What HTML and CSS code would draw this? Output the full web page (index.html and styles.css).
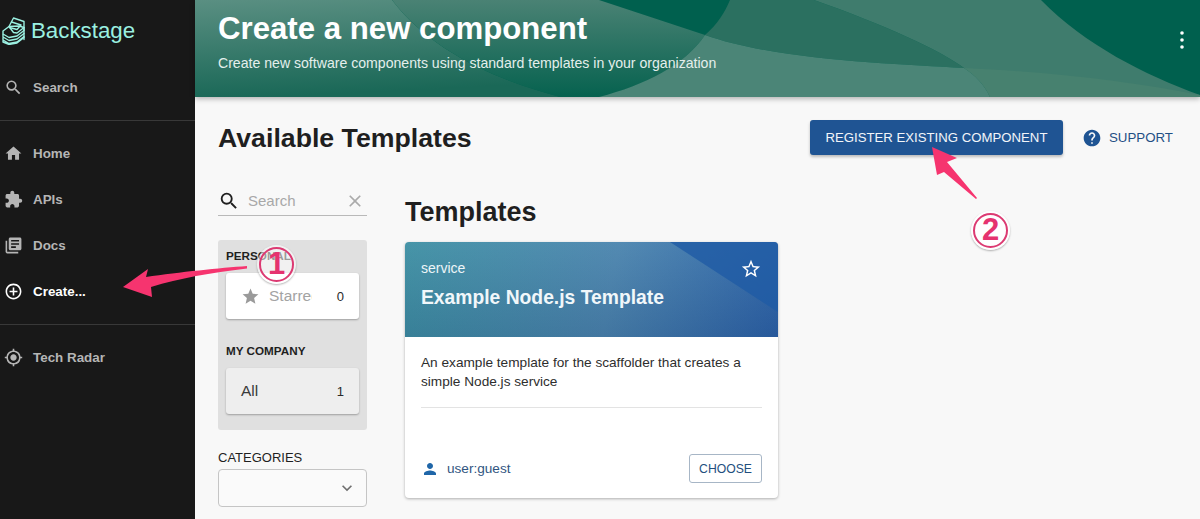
FILE: index.html
```html
<!DOCTYPE html>
<html lang="en">
<head>
<meta charset="utf-8">
<title>Create a new component</title>
<link rel="stylesheet" href="styles.css">
</head>
<body>
<div class="app">
  <nav class="sidebar">
    <div class="logo">
      <svg class="logo-mark" viewBox="0 0 23 28" fill="none" stroke="#9bf0e1" stroke-width="1.400" stroke-linejoin="round" stroke-linecap="round">
        <path d="M1 14 7 9.500 17 9l5 1.500v3L15 19l-8 1.500-6-3.500z"/>
        <path d="M1 17.500v2.500l6 3.500 8-1.500 7-5.500M1 20.500V23l6 3.500 8-1.500 7-5.500M1 23.500V25l6 2.500 8-1.500 7-5.500"/>
        <path d="M22 10.500V22.500"/>
        <path d="M7 9.500 11.500 1 22 4.500v6L15 16l-3.500-.5z"/>
        <path d="M9.500 5 19 8 15 12.500 7.500 10.500"/>
      </svg>
      <span class="logo-text">Backstage</span>
    </div>
    <a class="nav-item">
      <svg class="nav-icon" viewBox="0 0 24 24"><path d="M15.500 14h-.79l-.28-.27A6.470 6.470 0 0 0 16 9.500 6.500 6.500 0 1 0 9.500 16c1.610 0 3.090-.59 4.230-1.570l.27.28v.79l5 4.990L20.490 19l-4.990-5zm-6 0C7.010 14 5 11.990 5 9.500S7.010 5 9.500 5 14 7.010 14 9.500 11.990 14 9.500 14z"/></svg>
      <span>Search</span>
    </a>
    <div class="nav-spacer"></div>
    <hr class="nav-divider">
    <div class="nav-group">
      <a class="nav-item">
        <svg class="nav-icon" viewBox="0 0 24 24"><path d="M10 20v-6h4v6h5v-8h3L12 3 2 12h3v8z"/></svg>
        <span>Home</span>
      </a>
      <a class="nav-item">
        <svg class="nav-icon" viewBox="0 0 24 24"><path d="M20.500 11H19V7c0-1.100-.9-2-2-2h-4V3.500C13 2.120 11.880 1 10.500 1S8 2.120 8 3.500V5H4c-1.100 0-1.990.9-1.990 2v3.800H3.500c1.490 0 2.700 1.210 2.700 2.700s-1.210 2.700-2.700 2.700H2V20c0 1.100.9 2 2 2h3.800v-1.500c0-1.490 1.210-2.700 2.700-2.700 1.490 0 2.700 1.210 2.700 2.700V22H17c1.100 0 2-.9 2-2v-4h1.500c1.380 0 2.500-1.120 2.500-2.500S21.880 11 20.500 11z"/></svg>
        <span>APIs</span>
      </a>
      <a class="nav-item">
        <svg class="nav-icon" viewBox="0 0 24 24"><path d="M4 6H2v14c0 1.100.9 2 2 2h14v-2H4V6zm16-4H8c-1.100 0-2 .9-2 2v12c0 1.100.9 2 2 2h12c1.100 0 2-.9 2-2V4c0-1.100-.9-2-2-2zm-1 9H9V9h10v2zm-4 4H9v-2h6v2zm4-8H9V5h10v2z"/></svg>
        <span>Docs</span>
      </a>
      <a class="nav-item nav-active">
        <svg class="nav-icon" viewBox="0 0 24 24"><path d="M13 7h-2v4H7v2h4v4h2v-4h4v-2h-4V7zm-1-5C6.480 2 2 6.480 2 12s4.480 10 10 10 10-4.480 10-10S17.520 2 12 2zm0 18c-4.410 0-8-3.590-8-8s3.590-8 8-8 8 3.590 8 8-3.590 8-8 8z"/></svg>
        <span>Create...</span>
      </a>
    </div>
    <hr class="nav-divider">
    <div class="nav-group-last">
      <a class="nav-item">
        <svg class="nav-icon" viewBox="0 0 24 24"><path d="M12 8c-2.210 0-4 1.790-4 4s1.790 4 4 4 4-1.790 4-4-1.790-4-4-4zm8.940 3A8.994 8.994 0 0 0 13 3.060V1h-2v2.060A8.994 8.994 0 0 0 3.060 11H1v2h2.060A8.994 8.994 0 0 0 11 20.940V23h2v-2.060A8.994 8.994 0 0 0 20.940 13H23v-2h-2.060zM12 19c-3.870 0-7-3.130-7-7s3.130-7 7-7 7 3.130 7 7-3.130 7-7 7z"/></svg>
        <span>Tech Radar</span>
      </a>
    </div>
  </nav>

  <main class="main">
    <header class="hero">
      <svg class="hero-art" viewBox="0 0 1005 97" preserveAspectRatio="none">
        <defs>
          <linearGradient id="heroFade" x1="0" y1="0" x2="0.18" y2="1">
            <stop offset="0" stop-color="#5a8f82"/>
            <stop offset="1" stop-color="#1a6857"/>
          </linearGradient>
          <linearGradient id="heroBand" x1="0" y1="0" x2="0" y2="1">
            <stop offset="0" stop-color="#4a8274"/>
            <stop offset="1" stop-color="#06624f"/>
          </linearGradient>
        </defs>
        <rect width="1005" height="97" fill="#00604e"/>
        <path d="M0 0H197C235 50 300 80 365 97H0z" fill="url(#heroFade)"/>
        <path d="M197 0H404L510 35C490 65 450 85 404 97H365C300 80 235 50 197 0z" fill="url(#heroBand)"/>
        <path d="M535 0H619C690 25 745 50 769 68 700 64 580 60 510 35 522 25 530 12 535 0z" fill="#2b7060"/>
        <path d="M619 0H846C890 45 950 75 1005 95V97H795C790 85 780 75 769 68 745 50 690 25 619 0z" fill="#3f7c6d"/>
        <path d="M510 35C580 60 700 64 769 68 780 75 790 85 795 97H404C450 85 490 65 510 35z" fill="#4b8577"/>
        <path d="M769 68C860 72 940 82 1005 95V97H795C790 85 780 75 769 68z" fill="#47816f"/>
      </svg>
      <div class="hero-text">
        <h1>Create a new component</h1>
        <p>Create new software components using standard templates in your organization</p>
      </div>
      <svg class="hero-menu" viewBox="0 0 4 20"><circle cx="2" cy="3" r="1.800"/><circle cx="2" cy="10" r="1.800"/><circle cx="2" cy="17" r="1.800"/></svg>
    </header>

    <div class="content">
      <div class="content-head">
        <h2 class="page-title">Available Templates</h2>
        <div class="head-actions">
          <button class="btn-primary">REGISTER EXISTING COMPONENT</button>
          <a class="support">
            <svg class="support-icon" viewBox="0 0 24 24"><path d="M12 2C6.480 2 2 6.480 2 12s4.480 10 10 10 10-4.480 10-10S17.520 2 12 2zm1 17h-2v-2h2v2zm2.070-7.750l-.9.920C13.450 12.900 13 13.500 13 15h-2v-.5c0-1.100.45-2.100 1.170-2.830l1.240-1.260c.37-.36.590-.86.590-1.410 0-1.100-.9-2-2-2s-2 .9-2 2H8c0-2.210 1.790-4 4-4s4 1.790 4 4c0 .88-.36 1.680-.93 2.250z"/></svg>
            <span>SUPPORT</span>
          </a>
        </div>
      </div>

      <div class="columns">
        <aside class="filters">
          <div class="search-box">
            <svg class="search-icon" viewBox="0 0 24 24"><path d="M15.500 14h-.79l-.28-.27A6.470 6.470 0 0 0 16 9.500 6.500 6.500 0 1 0 9.500 16c1.610 0 3.090-.59 4.230-1.570l.27.28v.79l5 4.990L20.490 19l-4.990-5zm-6 0C7.010 14 5 11.990 5 9.500S7.010 5 9.500 5 14 7.010 14 9.500 11.990 14 9.500 14z"/></svg>
            <span class="search-placeholder">Search</span>
            <svg class="clear-icon" viewBox="0 0 24 24"><path d="M19 6.410 17.590 5 12 10.590 6.410 5 5 6.410 10.590 12 5 17.590 6.410 19 12 13.410 17.590 19 19 17.590 13.410 12z"/></svg>
          </div>
          <div class="filter-panel">
            <div class="filter-label">PERSONAL</div>
            <div class="filter-card">
              <svg class="star-solid" viewBox="0 0 24 24"><path d="M12 17.270 18.180 21l-1.640-7.030L22 9.240l-7.190-.61L12 2 9.190 8.630 2 9.240l5.460 4.730L5.820 21z"/></svg>
              <span class="filter-name clip">Starred</span>
              <span class="filter-count">0</span>
            </div>
            <div class="filter-label filter-label-2">MY COMPANY</div>
            <div class="filter-card filter-card-active">
              <span class="filter-name dark">All</span>
              <span class="filter-count">1</span>
            </div>
          </div>
          <div class="cat-label">CATEGORIES</div>
          <div class="select">
            <svg class="chevron" viewBox="0 0 24 24"><path d="M7.410 8.590 12 13.170l4.590-4.580L18 10l-6 6-6-6z"/></svg>
          </div>
        </aside>

        <section class="templates">
          <h2 class="section-title">Templates</h2>
          <article class="card">
            <div class="card-head">
              <svg class="card-art" viewBox="0 0 373 95" preserveAspectRatio="none">
                <path d="M265 0H373V70z" fill="#1f5ba5" opacity=".8"/>
              </svg>
              <div class="card-type">service</div>
              <div class="card-title">Example Node.js Template</div>
              <svg class="star-outline" viewBox="0 0 24 24"><path d="M22 9.240l-7.190-.62L12 2 9.190 8.630 2 9.240l5.460 4.730L5.820 21 12 17.270 18.180 21l-1.630-7.030L22 9.240zM12 15.400l-3.760 2.270 1-4.280-3.320-2.880 4.380-.38L12 6.100l1.710 4.040 4.380.38-3.320 2.880 1 4.280L12 15.400z"/></svg>
            </div>
            <div class="card-body">
              <p class="card-desc">An example template for the scaffolder that creates a simple Node.js service</p>
              <hr class="card-rule">
              <div class="card-foot">
                <svg class="user-icon" viewBox="0 0 24 24"><path d="M12 12c2.210 0 4-1.790 4-4s-1.790-4-4-4-4 1.790-4 4 1.790 4 4 4zm0 2c-2.670 0-8 1.340-8 4v2h16v-2c0-2.660-5.330-4-8-4z"/></svg>
                <span class="user-name">user:guest</span>
                <button class="btn-outline">CHOOSE</button>
              </div>
            </div>
          </article>
        </section>
      </div>
    </div>
  </main>
</div>

<svg class="arrow arrow-one" viewBox="0 0 130 36"><path d="M0 25 25 7 23 15C57 10 97 6 124 4V6.500C87 11 57 16 28 25L29 35z"/></svg>
<svg class="arrow arrow-two" viewBox="0 0 50 60"><path d="M2 2 27 13 17 17 47 53 46 54 14 27 7 30z"/></svg>
<div class="badge badge-one"><span>1</span></div>
<div class="badge badge-two"><span>2</span></div>
</body>
</html>
```

FILE: styles.css
```css
* { box-sizing: border-box; }
html, body { margin: 0; padding: 0; height: 519px; overflow: hidden; }
body { font-family: "Liberation Sans", Arial, sans-serif; background: #f8f8f8; color: #1f1f1f; position: relative; }
svg { display: block; flex: none; }
h1, h2, p { margin: 0; }
button { font-family: inherit; }

.app { display: flex; height: 519px; }

.sidebar { width: 195px; flex: none; background: #181818; color: #b5b5b5; }
.logo { display: flex; align-items: center; gap: 6px; height: 64px; padding: 0 0 2px 2px; }
.logo-mark { width: 23px; height: 28px; }
.logo-text { font-size: 22.300px; color: #9bf0e1; }

.nav-item { display: flex; align-items: center; height: 46px; padding-left: 4px; font-size: 13.400px; font-weight: 700; gap: 10px; }
.nav-icon { width: 19px; height: 19px; fill: #b5b5b5; }
.nav-spacer { height: 10px; }
.nav-active { color: #fff; }
.nav-active .nav-icon { fill: #fff; }
.nav-divider { border: 0; height: 1px; background: #383838; margin: 0; }
.nav-group { padding: 9px 0 10px; }
.nav-group-last { padding-top: 9px; }

.main { flex: 1; min-width: 0; }

.hero { position: relative; height: 97px; display: flex; justify-content: space-between; align-items: flex-start; color: #fff; box-shadow: 0 2px 5px rgba(0,0,0,.28); }
.hero-art { position: absolute; inset: 0; width: 100%; height: 100%; }
.hero-text { position: relative; padding: 10px 0 0 23px; }
.hero-text h1 { font-size: 31.200px; line-height: 38px; font-weight: 700; }
.hero-text p { font-size: 14.100px; line-height: 18px; margin-top: 6px; color: #e4efec; }
.hero-menu { position: relative; width: 4px; height: 20px; margin: 30px 16px 0 0; fill: #fff; }

.content { padding: 23px 27px 0 23px; }
.content-head { display: flex; justify-content: space-between; align-items: center; height: 35px; }
.page-title { font-size: 26.700px; line-height: 37px; font-weight: 700; color: #1f1f1f; padding-top: 2px; }
.head-actions { display: flex; align-items: center; gap: 19px; }
.btn-primary { width: 253px; height: 35px; border: 0; border-radius: 3px; background: #1f5493; color: #f2f5f9; font-size: 13.200px; font-weight: 400; padding: 0; box-shadow: 0 2px 3px rgba(0,0,0,.25); }
.support { display: flex; align-items: center; gap: 7px; font-size: 13.300px; color: #1f4f85; }
.support-icon { width: 20px; height: 20px; fill: #1f5493; }

.columns { display: flex; gap: 38px; padding-top: 31px; }
.filters { width: 149px; flex: none; }

.search-box { display: flex; align-items: center; height: 30px; border-bottom: 1px solid #b9b9b9; }
.search-icon { width: 22px; height: 22px; fill: #1f1f1f; }
.search-placeholder { font-size: 15px; color: #a8a8a8; margin-left: 8px; flex: 1; }
.clear-icon { width: 20px; height: 20px; fill: #aaa; margin-right: 2px; }

.filter-panel { background: #e0e0e0; border-radius: 3px; margin-top: 24px; padding: 8px 8px 16px; height: 190px; }
.filter-label { font-size: 11.700px; font-weight: 700; line-height: 16px; color: #1f1f1f; }
.filter-label-2 { margin-top: 24px; }
.filter-card { display: flex; align-items: center; height: 46px; margin-top: 9px; background: #fff; border-radius: 3px; box-shadow: 0 1px 2px rgba(0,0,0,.3); padding: 0 15px; }
.filter-card-active { background: #eee; margin-top: 9px; }
.star-solid { width: 19px; height: 19px; fill: #9a9a9a; margin-right: 9px; }
.filter-name { font-size: 15.500px; color: #a3a3a3; }
.filter-name.clip { overflow: hidden; white-space: nowrap; width: 43px; }
.filter-name.dark { color: #3a3a3a; }
.filter-count { font-size: 13px; color: #2a2a2a; margin-left: auto; }

.cat-label { font-size: 13px; line-height: 16px; color: #1f1f1f; margin-top: 20px; }
.select { display: flex; align-items: center; justify-content: flex-end; height: 38px; margin-top: 3px; border: 1px solid #c5c5c5; border-radius: 4px; background: #fafafa; padding-right: 9px; }
.chevron { width: 20px; height: 20px; fill: #6f6f6f; }

.templates { width: 373px; padding-top: 10px; }
.section-title { font-size: 27px; line-height: 32px; font-weight: 700; color: #1f1f1f; }
.card { margin-top: 14px; background: #fff; border-radius: 4px; box-shadow: 0 1px 3px rgba(0,0,0,.3); height: 256px; overflow: hidden; }
.card-head { position: relative; height: 95px; padding: 18px 16px 0; color: #fff; background: linear-gradient(180deg, rgba(255,255,255,.05), rgba(0,0,40,.1)), linear-gradient(100deg, #3d8fa3 0%, #4a84ae 55%, #2c63a8 100%); }
.card-art { position: absolute; inset: 0; width: 100%; height: 100%; }
.card-type { position: relative; font-size: 14px; line-height: 16px; color: #edf5f8; }
.card-title { position: relative; font-size: 19.300px; font-weight: 700; line-height: 24px; margin-top: 10px; color: #f1f7fa; }
.star-outline { position: absolute; top: 16px; right: 16px; width: 22px; height: 22px; fill: #fff; }
.card-body { padding: 16px 16px 0; }
.card-desc { font-size: 13.650px; line-height: 19px; color: #2e2e2e; }
.card-rule { border: 0; height: 1px; background: #e3e3e3; margin: 16px 0 0; }
.card-foot { display: flex; align-items: center; margin-top: 46px; }
.user-icon { width: 18px; height: 18px; fill: #1f66a8; }
.user-name { flex: 1; font-size: 13.600px; color: #31557f; margin-left: 8px; }
.btn-outline { width: 73px; height: 29px; border: 1px solid #a7b6c6; border-radius: 3px; background: #fff; color: #234f7e; font-size: 12.200px; padding: 0; }

.arrow { position: absolute; fill: #f6346f; }
.arrow-one { left: 123px; top: 262px; width: 130px; height: 36px; }
.arrow-two { left: 930px; top: 145px; width: 50px; height: 60px; }

.badge { position: absolute; width: 39px; height: 39px; border-radius: 50%; background: rgba(255,255,255,.8); box-shadow: 0 1px 2px rgba(0,0,0,.3); display: flex; align-items: center; justify-content: center; }
.badge span { width: 35px; height: 35px; border: 2.500px solid #dc3a72; border-radius: 50%; color: #e5326f; font-size: 31px; line-height: 30px; font-weight: 700; text-align: center; display: block; }
.badge-one { left: 257px; top: 245px; background: rgba(255,255,255,.55); }
.badge-two { left: 971px; top: 211px; }
```
